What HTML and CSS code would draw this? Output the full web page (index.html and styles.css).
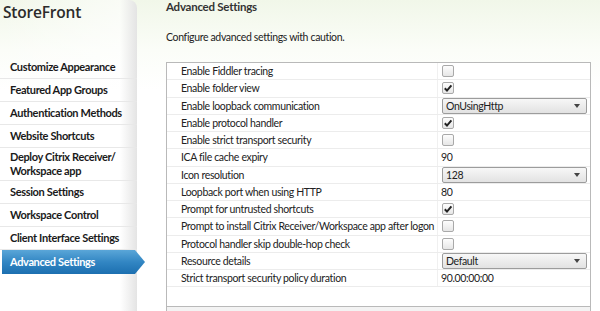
FILE: index.html
```html
<!DOCTYPE html>
<html lang="en">
<head>
    <meta charset="UTF-8">
    <title>StoreFront - Advanced Settings</title>
    <link rel="stylesheet" href="styles.css">
</head>
<body>
    <div class="app">
        <div class="sidebar">
            <div class="brand">StoreFront</div>
            <ul class="nav">
                <li>Customize Appearance</li>
                <li>Featured App Groups</li>
                <li>Authentication Methods</li>
                <li>Website Shortcuts</li>
                <li class="tall">Deploy Citrix Receiver/<br>Workspace app</li>
                <li>Session Settings</li>
                <li>Workspace Control</li>
                <li>Client Interface Settings</li>
                <li class="active">Advanced Settings</li>
            </ul>
        </div>

        <div class="main">
            <h1>Advanced Settings</h1>
            <p class="intro">Configure advanced settings with caution.</p>

            <div class="grid">
                <div class="row"><div class="label">Enable Fiddler tracing</div><div class="value"><span class="check"></span></div></div>
                <div class="row"><div class="label">Enable folder view</div><div class="value"><span class="check on"><svg viewBox="0 0 10 10"><path d="M1.8 5.2 L4 7.6 L8.4 2.4" /></svg></span></div></div>
                <div class="row"><div class="label">Enable loopback communication</div><div class="value"><div class="select">OnUsingHttp<span class="arrow"></span></div></div></div>
                <div class="row"><div class="label">Enable protocol handler</div><div class="value"><span class="check on"><svg viewBox="0 0 10 10"><path d="M1.8 5.2 L4 7.6 L8.4 2.4" /></svg></span></div></div>
                <div class="row"><div class="label">Enable strict transport security</div><div class="value"><span class="check"></span></div></div>
                <div class="row"><div class="label">ICA file cache expiry</div><div class="value">90</div></div>
                <div class="row"><div class="label">Icon resolution</div><div class="value"><div class="select">128<span class="arrow"></span></div></div></div>
                <div class="row"><div class="label">Loopback port when using HTTP</div><div class="value">80</div></div>
                <div class="row"><div class="label">Prompt for untrusted shortcuts</div><div class="value"><span class="check on"><svg viewBox="0 0 10 10"><path d="M1.8 5.2 L4 7.6 L8.4 2.4" /></svg></span></div></div>
                <div class="row"><div class="label">Prompt to install Citrix Receiver/Workspace app after logon</div><div class="value"><span class="check"></span></div></div>
                <div class="row"><div class="label">Protocol handler skip double-hop check</div><div class="value"><span class="check"></span></div></div>
                <div class="row"><div class="label">Resource details</div><div class="value"><div class="select">Default<span class="arrow"></span></div></div></div>
                <div class="row"><div class="label">Strict transport security policy duration</div><div class="value">90.00:00:00</div></div>
                <div class="filler"></div>
                <div class="footer"></div>
            </div>
        </div>
    </div>
</body>
</html>
```

FILE: styles.css
```css
body {
    margin: 0;
    width: 600px;
    height: 311px;
    overflow: hidden;
    font-family: Lato, "Open Sans", sans-serif;
    color: #222;
    background: linear-gradient(to bottom, #f1f7e9 0, #fbfdf8 50px, #fff 90px);
}
.app {
    display: flex;
    height: 311px;
}

/* left navigation */
.sidebar {
    width: 137px;
    flex-shrink: 0;
    border-top-right-radius: 8px;
    background: linear-gradient(to right, rgba(255,255,255,0) 0, rgba(255,255,255,0.6) 120px, #e4e4e4 137px);
}
.brand {
    font-family: "Open Sans", sans-serif;
    font-size: 15.5px;
    font-weight: 600;
    color: #2b2b2b;
    padding: 1px 0 0 3px;
    height: 55px;
    letter-spacing: -0.2px;
}
.nav {
    list-style: none;
    margin: 0;
    padding: 0;
}
.nav li {
    font-size: 11px;
    font-weight: 700;
    color: #1a1a1a;
    line-height: 14px;
    padding: 4px 0 4px 10px;
    border-bottom: 1px solid #e8e8e8;
    letter-spacing: -0.35px;
}
.nav li.tall {
    padding: 2px 0 2px 10px;
}
.nav li.active {
    width: 135px;
    margin-left: 2px;
    padding: 5px 0 5px 8px;
    color: #fff;
    border-bottom: none;
    background: linear-gradient(to bottom, #5aa6d8 0, #3286c3 50%, #1c6fb0 100%);
    clip-path: polygon(0 0, calc(100% - 10px) 0, 100% 50%, calc(100% - 10px) 100%, 0 100%);
}

/* settings panel */
.main {
    flex: 1;
    padding-left: 29px;
    padding-right: 9px;
    display: flex;
    flex-direction: column;
}
h1 {
    font-size: 11.5px;
    font-weight: 700;
    color: #333;
    margin: 0;
    line-height: 14px;
    letter-spacing: -0.25px;
}
.intro {
    font-size: 10.5px;
    letter-spacing: -0.35px;
    margin: 16px 0 0 0;
    line-height: 14px;
    color: #222;
    height: 32px;
}
.grid {
    flex: 1;
    display: flex;
    flex-direction: column;
    border: 1px solid #b9b9b9;
    border-bottom: none;
    background: #fff;
}
.row {
    display: flex;
    height: 17.25px;
    box-sizing: border-box;
    border-bottom: 1px solid #ececec;
    font-size: 10.5px;
    letter-spacing: -0.35px;
    align-items: center;
}
.label {
    width: 256px;
    padding-left: 14px;
    height: 100%;
    display: flex;
    align-items: center;
    border-right: 1px solid #f0f0f0;
    white-space: nowrap;
}
.value {
    flex: 1;
    padding-left: 3px;
    height: 100%;
    display: flex;
    align-items: center;
    color: #222;
}
.check {
    width: 12px;
    height: 12px;
    box-sizing: border-box;
    border: 1px solid #a9a9a9;
    border-radius: 2px;
    background: linear-gradient(to bottom, #fdfdfd, #e6e6e6);
    margin-left: 1px;
}
.check svg {
    display: block;
    width: 10px;
    height: 10px;
}
.check svg path {
    fill: none;
    stroke: #222;
    stroke-width: 2;
}
.select {
    width: 145px;
    height: 16px;
    box-sizing: border-box;
    margin-left: 1px;
    border: 1px solid #9c9c9c;
    border-radius: 2px;
    background: linear-gradient(to bottom, #f7f7f7, #e2e2e2);
    display: flex;
    align-items: center;
    justify-content: space-between;
    padding: 0 6px 0 3px;
}
.arrow {
    width: 0;
    height: 0;
    border-left: 3px solid transparent;
    border-right: 3px solid transparent;
    border-top: 4px solid #444;
}
.filler {
    height: 19px;
}
.footer {
    flex: 1;
    border-top: 1px solid #b9b9b9;
    background: #f3f3f3;
}
```
